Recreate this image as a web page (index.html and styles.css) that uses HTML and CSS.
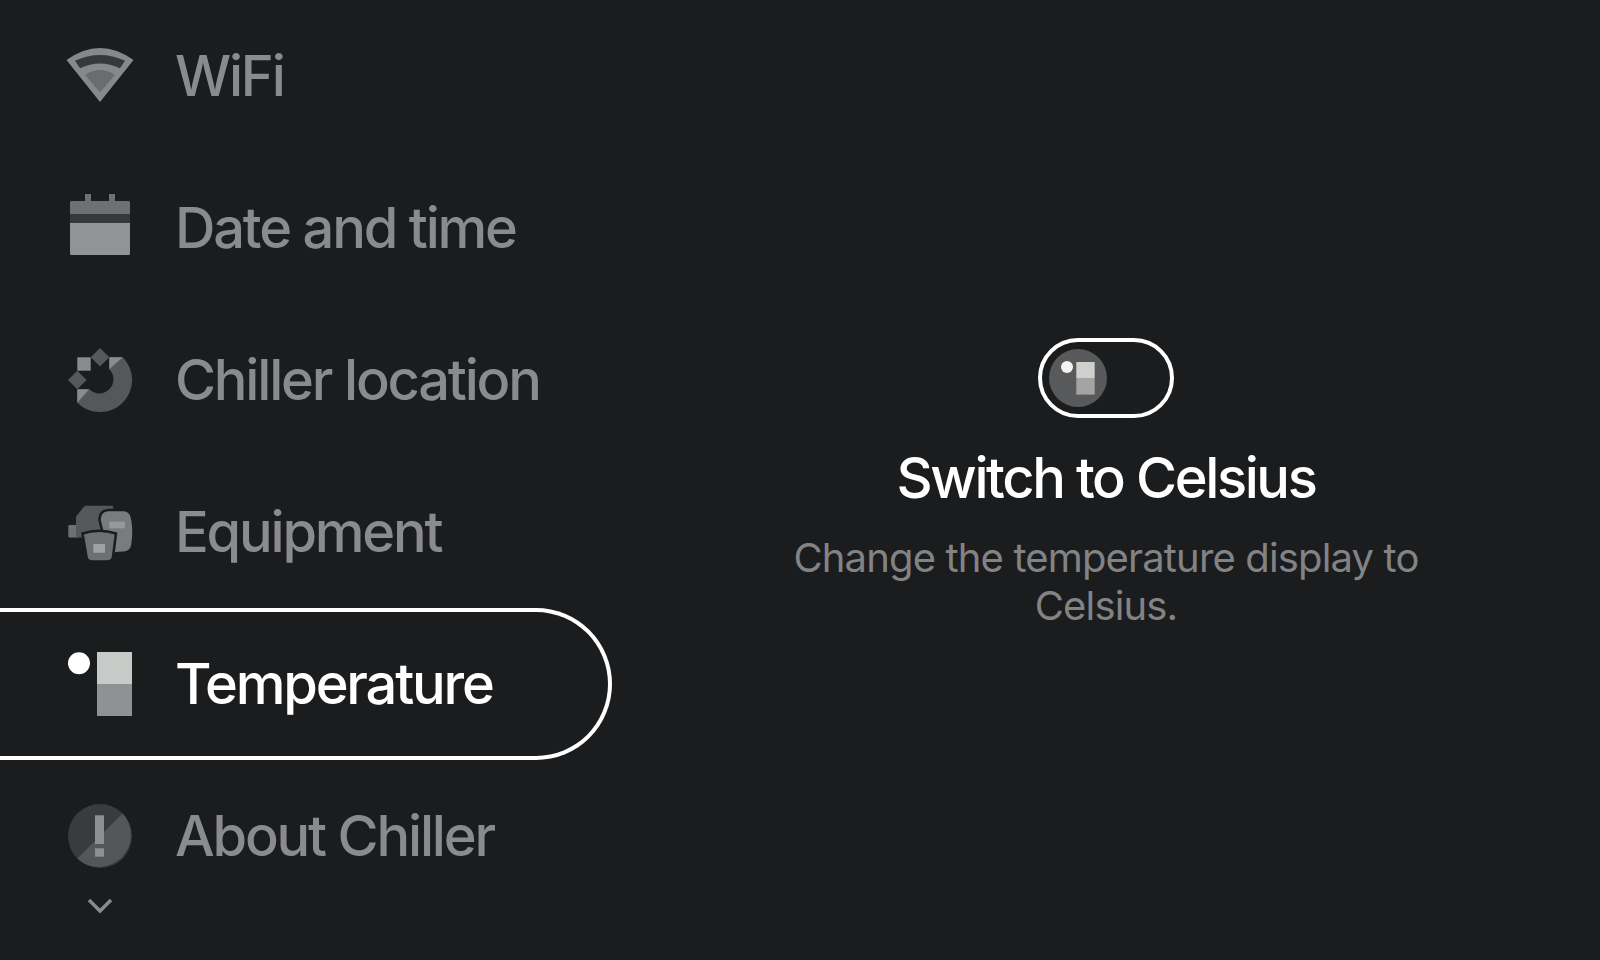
FILE: index.html
```html
<!DOCTYPE html>
<html lang="en">
<head>
    <meta charset="UTF-8">
    <meta name="viewport" content="width=device-width, initial-scale=1.0">
    <title>Settings</title>
    <link rel="stylesheet" href="styles.css">
</head>
<body>
    <div class="settings">
        <nav class="menu">
            <a class="menu-item">
                <svg class="menu-icon" viewBox="0 0 72 72">
                    <path d="M36 62 L2.5 20 Q36 -4 69.5 20 Z" fill="#87888a"/>
                    <path d="M11 20.700 Q36 9.500 61 20.700 L56 28.300 Q36 18.500 16 28.300 Z" fill="#37383a"/>
                    <path d="M21 35 Q36 25 51 35 L36 52.300 Z" fill="#6b6c6d"/>
                </svg>
                <span>WiFi</span>
            </a>
            <a class="menu-item">
                <svg class="menu-icon" viewBox="0 0 72 72">
                    <rect x="21" y="2" width="6" height="8" fill="#6f7071"/>
                    <rect x="45" y="2" width="6" height="8" fill="#6f7071"/>
                    <path d="M6 22 V10.500 Q6 9 7.500 9 H64.500 Q66 9 66 10.500 V22 Z" fill="#6f7071"/>
                    <rect x="6" y="22" width="60" height="9" fill="#37383a"/>
                    <path d="M6 31 H66 V61.500 Q66 63 64.500 63 H7.500 Q6 63 6 61.500 Z" fill="#929394"/>
                </svg>
                <span>Date and time</span>
            </a>
            <a class="menu-item">
                <svg class="menu-icon" viewBox="0 0 72 72">
                    <path d="M45.300 13.300 H58.700 A32 32 0 1 1 13.300 58.700 V45.300 H25.300 A14 14 0 0 0 45.300 25.300 Z" fill="#565758"/>
                    <path d="M45.300 13.300 H58.700 L45.300 25.300 Z" fill="#8a8b8c"/>
                    <path d="M13.300 45.300 H25.300 L13.300 58.700 Z" fill="#8a8b8c"/>
                    <rect x="13.300" y="13.300" width="13.400" height="13.400" fill="#8a8b8c"/>
                    <path d="M36 4 L45.300 13.300 L36 22.600 L26.700 13.300 Z" fill="#565758"/>
                    <path d="M13.300 26.700 L22.600 36 L13.300 45.300 L4 36 Z" fill="#565758"/>
                </svg>
                <span>Chiller location</span>
            </a>
            <a class="menu-item">
                <svg class="menu-icon" viewBox="0 0 72 72">
                    <path d="M5.500 29 H14 V41.500 H6 Q4.300 41.500 4.300 40 V30 Q4.300 29 5.500 29 Z" fill="#6f7071"/>
                    <path d="M12 20.700 L20 10.500 Q21 9.700 22 9.700 H48 Q49.300 9.700 49.300 11 V41.500 H12 Z" fill="#565758"/>
                    <path d="M35.500 24 Q35.500 14.500 44 14 H60 Q67.500 14.500 68.500 24 Q70.500 36 68.500 48 Q68 55 61 56.500 L44 58 Z" fill="#7a7b7c" stroke="#1b1c1e" stroke-width="2.500"/>
                    <rect x="45.300" y="25.700" width="15.700" height="6.600" fill="#979899"/>
                    <path d="M18.500 37.500 Q35 32 52 37.500 L49 61 Q48.500 65.500 43 65.500 H28 Q23 65.500 22.500 61 Z" fill="#6e6f70" stroke="#1b1c1e" stroke-width="2.500"/>
                    <rect x="29.300" y="48" width="11.700" height="8.700" fill="#a0a1a2"/>
                </svg>
                <span>Equipment</span>
            </a>
            <a class="menu-item menu-item-active">
                <svg class="menu-icon" viewBox="0 0 72 72">
                    <circle cx="15" cy="15.300" r="11" fill="#ffffff"/>
                    <rect x="33" y="4" width="35" height="32" fill="#c8cac8"/>
                    <rect x="33" y="36" width="35" height="32" fill="#909192"/>
                </svg>
                <span>Temperature</span>
            </a>
            <a class="menu-item">
                <svg class="menu-icon" viewBox="0 0 72 72">
                    <circle cx="36" cy="36" r="32" fill="#3a3b3d"/>
                    <path d="M58.600 13.400 A32 32 0 0 1 13.400 58.600 Z" fill="#555658"/>
                    <rect x="31" y="15.300" width="9" height="28.700" fill="#8e8f90"/>
                    <rect x="31" y="48.300" width="9" height="8.400" fill="#8e8f90"/>
                </svg>
                <span>About Chiller</span>
            </a>
            <svg class="menu-more" viewBox="0 0 28 18">
                <path d="M3 3 L14 14 L25 3" fill="none" stroke="#8a8b8c" stroke-width="3.500"/>
            </svg>
        </nav>
        <main class="detail">
            <div class="toggle">
                <svg class="toggle-knob" viewBox="0 0 58 58">
                    <circle cx="29" cy="29" r="29" fill="#58595b"/>
                    <circle cx="18" cy="18" r="6" fill="#f3f3ef"/>
                    <rect x="27.300" y="13" width="18.400" height="16" fill="#cfd0cc"/>
                    <rect x="27.300" y="29" width="18.400" height="16.600" fill="#a3a4a3"/>
                </svg>
            </div>
            <h1>Switch to Celsius</h1>
            <p>Change the temperature display to Celsius.</p>
        </main>
    </div>
</body>
</html>
```

FILE: styles.css
```css
html, body {
    margin: 0;
    height: 100%;
    overflow: hidden;
}
body {
    background-color: #1b1c1e;
    font-family: Inter, "Noto Sans", sans-serif;
}
.settings {
    display: flex;
    height: 960px;
}
.menu {
    position: relative;
    flex: 0 0 612px;
    display: flex;
    flex-direction: column;
}
.menu-item {
    display: flex;
    align-items: center;
    gap: 39px;
    flex: 0 0 152px;
    box-sizing: border-box;
    padding-left: 64px;
    color: #8a8b8c;
    font-size: 56px;
    font-weight: 500;
    letter-spacing: -2.2px;
}
.menu-item-active {
    color: #ffffff;
    border: 4px solid #ffffff;
    border-left: none;
    border-radius: 0 76px 76px 0;
}
.menu-icon {
    flex: 0 0 72px;
    width: 72px;
    height: 72px;
}
.menu-more {
    position: absolute;
    left: 86px;
    top: 897px;
    width: 28px;
    height: 18px;
}
.detail {
    flex: 1;
    display: flex;
    flex-direction: column;
    align-items: center;
    justify-content: center;
    padding-top: 8px;
    text-align: center;
}
.toggle {
    display: flex;
    align-items: center;
    box-sizing: border-box;
    width: 136px;
    height: 80px;
    padding-left: 7px;
    border: 4px solid #ffffff;
    border-radius: 40px;
}
.toggle-knob {
    width: 58px;
    height: 58px;
}
.detail h1 {
    margin: 26px 0 0;
    color: #ffffff;
    font-size: 56px;
    line-height: 68px;
    font-weight: 500;
    letter-spacing: -2.4px;
}
.detail p {
    width: 680px;
    margin: 22px 0 0;
    color: #828385;
    font-size: 40px;
    line-height: 48px;
    font-weight: 400;
    letter-spacing: -0.85px;
}
```
